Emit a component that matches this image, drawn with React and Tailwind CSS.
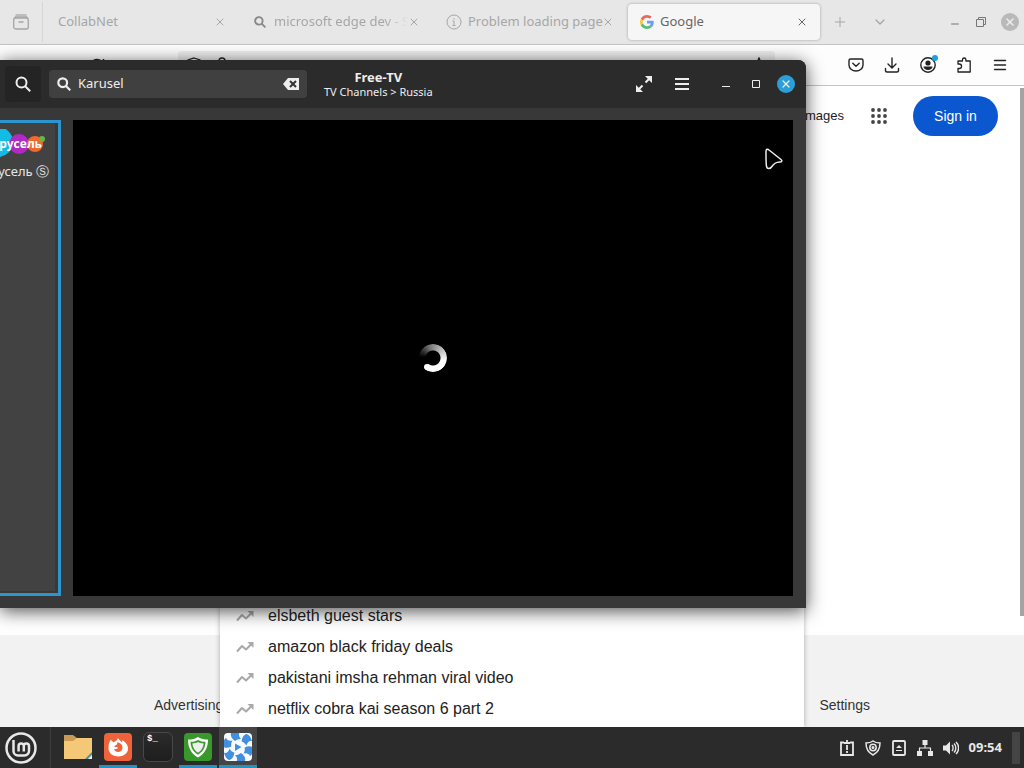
import React from 'react';
import { X, Plus, ChevronDown, Minus } from 'lucide-react';

const GoogleLogo = () => (
  <svg className="w-3.5 h-3.5 shrink-0" viewBox="0 0 48 48">
    <path fill="#ea6a5f" d="M24 9.5c3.5 0 6.700 1.200 9.200 3.600l6.900-6.900C35.900 2.400 30.500 0 24 0 14.600 0 6.500 5.400 2.600 13.200l8 6.200C12.400 13.700 17.700 9.500 24 9.500z" />
    <path fill="#6a9df5" d="M47 24.500c0-1.600-.2-3.100-.4-4.500H24v9h12.900c-.6 3-2.300 5.500-4.800 7.200l7.700 6C44.400 38 47 31.800 47 24.500z" />
    <path fill="#f5c84c" d="M10.500 28.600A14.500 14.500 0 0 1 10.500 19.400l-8-6.200a24 24 0 0 0 0 21.600l8-6.200z" />
    <path fill="#5dbb78" d="M24 48c6.500 0 11.900-2.100 15.900-5.800l-7.700-6c-2.200 1.500-4.900 2.300-8.200 2.300-6.300 0-11.600-4.200-13.500-9.900l-8 6.200C6.500 42.600 14.600 48 24 48z" />
  </svg>
);

const SearchGlyph = ({ className, strokeWidth = 2 }) => (
  <svg className={className} viewBox="0 0 16 16" fill="none" stroke="currentColor" strokeWidth={strokeWidth}>
    <circle cx="6.500" cy="6.500" r="5" />
    <path d="M10.200 10.200l5 5" />
  </svg>
);

const InfoGlyph = () => (
  <svg className="w-4 h-4 shrink-0" viewBox="0 0 16 16" fill="none" stroke="currentColor">
    <circle cx="8" cy="8" r="7" />
    <path d="M8 7v4.500M6.500 7H8M6.500 11.500h3M8 4v1.500" />
  </svg>
);

const TrendGlyph = () => (
  <svg className="w-[18px] h-3 shrink-0" viewBox="0 0 18 12">
    <path d="M1 10.500l5-5.500 4 3.500 5-5" fill="none" stroke="#a8a8a8" strokeWidth="2" strokeLinejoin="round" />
    <path d="M11.500 1H17.500v6z" fill="#a8a8a8" />
  </svg>
);

const pestanas = [
  { titulo: 'CollabNet' },
  {
    titulo: 'microsoft edge dev - S',
    icono: <SearchGlyph className="w-3 h-3 shrink-0 mx-0.5 text-[#888]" strokeWidth={2.5} />,
    difuminada: true,
  },
  { titulo: 'Problem loading page', icono: <InfoGlyph /> },
  { titulo: 'Google', icono: <GoogleLogo />, activa: true },
];

const sugerencias = [
  'elsbeth guest stars',
  'amazon black friday deals',
  'pakistani imsha rehman viral video',
  'netflix cobra kai season 6 part 2',
];

const Pestana = ({ titulo, icono, activa, difuminada }) => (
  <div
    role="tab"
    aria-selected={!!activa}
    className={`flex-1 min-w-0 max-w-[192px] h-9 flex items-center px-3 rounded-sm text-[13px] ${
      activa ? 'bg-[#f6f6f6] text-[#666] shadow-[0_0_3px_rgba(0,0,0,0.3)]' : 'text-[#a6a6a6]'
    }`}
  >
    {icono}
    <span
      className={`flex-1 min-w-0 whitespace-nowrap ${icono ? 'ml-1.5' : ''} ${
        difuminada ? 'overflow-hidden [mask-image:linear-gradient(to_left,transparent,#000_24px)]' : ''
      }`}
    >
      {titulo}
    </span>
    <button type="button" aria-label="Close tab" className="shrink-0">
      <X className="w-3 h-3" strokeWidth={2} />
    </button>
  </div>
);

const BarraPestanas = () => (
  <div className="h-11 shrink-0 flex items-center bg-[#e7e7e7] text-[#a6a6a6]">
    <button type="button" aria-label="Recent browsing" className="w-[43px] h-10 shrink-0 flex items-center justify-center border-r border-[#d6d6d6]">
      <svg className="w-4 h-4" viewBox="0 0 16 16" fill="none" stroke="currentColor" strokeWidth="1.3">
        <path d="M2.500 1h11" />
        <rect x=".7" y="4" width="14.600" height="11" rx="2" />
        <path d="M1.500 4.500l.8-1.500h11.400l.8 1.500M5.500 8h5" />
      </svg>
    </button>
    <div role="tablist" className="flex flex-1 gap-0.5 pl-[3px] min-w-0">
      {pestanas.map((p) => (
        <Pestana key={p.titulo} {...p} />
      ))}
      <button type="button" aria-label="New tab" className="w-9 flex items-center justify-center">
        <Plus className="w-4 h-4" strokeWidth={1.5} />
      </button>
      <button type="button" aria-label="List all tabs" className="w-10 flex items-center justify-center">
        <ChevronDown className="w-4 h-4" />
      </button>
    </div>
    <div className="flex items-center gap-3.5 pr-[5px] text-[#777]">
      <button type="button" aria-label="Minimize" className="pt-1">
        <Minus className="w-3 h-3" strokeWidth={2} />
      </button>
      <button type="button" aria-label="Restore">
        <svg className="w-3 h-3" viewBox="0 0 12 12" fill="none" stroke="currentColor">
          <path d="M1.500 3.500h7v7h-7zM3.500 3V1.500h7v7H9" />
        </svg>
      </button>
      <button type="button" aria-label="Close" className="w-[18px] h-[18px] rounded-full bg-[#b9b9b9] text-[#eee] flex items-center justify-center">
        <X className="w-3 h-3" strokeWidth={3} />
      </button>
    </div>
  </div>
);

const BarraNavegacion = () => (
  <div className="h-[42px] shrink-0 flex items-center pr-1.5 bg-[#fdfdfd] border-y border-[#c4c4c4] text-[#222]">
    <div className="w-[178px] shrink-0 flex items-center pl-[89px]">
      <button type="button" aria-label="Reload">
        <svg className="w-4 h-4" viewBox="0 0 16 16" fill="none" stroke="currentColor" strokeWidth="1.500">
          <path d="M14 6.500A6.500 6.500 0 1 0 14.500 9M14.500 2v5h-5" />
        </svg>
      </button>
    </div>
    <div className="w-[597px] min-w-0 h-7 flex items-center gap-3 px-2 rounded bg-[#eee]">
      <svg className="w-4 h-4 shrink-0" viewBox="0 0 16 16" fill="none" stroke="currentColor" strokeWidth="1.300">
        <path d="M8 1l6 2c0 6-2 10-6 12C4 13 2 9 2 3z" />
      </svg>
      <svg className="w-4 h-4 shrink-0" viewBox="0 0 16 16" fill="none" stroke="currentColor" strokeWidth="1.500">
        <path d="M5 7V4a3 3 0 0 1 6 0v3M3 7h10v8H3z" />
      </svg>
      <input aria-label="Address" className="flex-1 min-w-0 bg-transparent outline-none" />
      <svg className="w-4 h-4 shrink-0" viewBox="0 0 16 16" fill="none" stroke="currentColor" strokeWidth="1.300">
        <path d="M8 1l2 4.500 5 .5-3.500 3.500 1 5L8 12l-4.500 2.500 1-5L1 6l5-.5z" />
      </svg>
    </div>
    <div className="flex ml-auto">
      <button type="button" aria-label="Pocket" className="w-9 flex justify-center">
        <svg className="w-4 h-4" viewBox="0 0 16 16" fill="none" stroke="currentColor" strokeWidth="1.400" strokeLinecap="round" strokeLinejoin="round">
          <path d="M2.500 2h11A1.500 1.500 0 0 1 15 3.500V8A7 6 0 0 1 1 8V3.500A1.500 1.500 0 0 1 2.500 2zM4.800 6.300L8 9.300l3.200-3" />
        </svg>
      </button>
      <button type="button" aria-label="Downloads" className="w-9 flex justify-center">
        <svg className="w-4 h-4" viewBox="0 0 16 16" fill="none" stroke="currentColor" strokeWidth="1.400" strokeLinecap="round" strokeLinejoin="round">
          <path d="M8 1v9.500M4 7l4 4 4-4M1.500 11.500v2A1.500 1.500 0 0 0 3 15h10a1.500 1.500 0 0 0 1.500-1.500v-2" />
        </svg>
      </button>
      <button type="button" aria-label="Account" className="w-9 flex justify-center relative">
        <svg className="w-4 h-4" viewBox="0 0 16 16">
          <circle cx="8" cy="8" r="7.200" fill="none" stroke="currentColor" strokeWidth="1.400" />
          <circle cx="8" cy="6" r="2.600" fill="currentColor" />
          <path d="M3.500 9.500h9c0 2-2 3.500-4.500 3.500s-4.500-1.500-4.500-3.500z" fill="currentColor" />
        </svg>
        <span className="absolute -top-0.5 right-2 w-1.5 h-1.5 rounded-full bg-[#1fa0dd]" />
      </button>
      <button type="button" aria-label="Extensions" className="w-9 flex justify-center">
        <svg className="w-4 h-4" viewBox="0 0 16 16" fill="none" stroke="currentColor" strokeWidth="1.300" strokeLinejoin="round">
          <path d="M2 7V4h4.500V2.700a1.700 1.700 0 0 1 3.400 0V4h4.300v11H2v-3.500h1.300a1.700 1.700 0 0 0 0-4.500z" />
        </svg>
      </button>
      <button type="button" aria-label="Menu" className="w-9 flex justify-center">
        <svg className="w-4 h-4" viewBox="0 0 16 16" stroke="currentColor" strokeWidth="1.400" strokeLinecap="round">
          <path d="M2.500 3.500h11M2.500 8h11M2.500 12.500h11" />
        </svg>
      </button>
    </div>
  </div>
);

const PaginaGoogle = () => (
  <div className="relative flex-1 min-h-0 flex bg-white font-['Liberation_Sans',sans-serif]">
    <div className="flex-1 flex flex-col">
      <header className="flex items-center justify-end pt-2.5 pr-[26px] text-[13px] text-[#222]">
        <a href="#images">Images</a>
        <button type="button" aria-label="Google apps" className="ml-[27px] mr-[26px]">
          <svg className="w-4 h-4" viewBox="0 0 16 16" fill="#444">
            {[2, 8, 14].map((y) => [2, 8, 14].map((x) => <circle key={`${x}-${y}`} cx={x} cy={y} r="1.900" />))}
          </svg>
        </button>
        <a href="#signin" className="w-[85px] h-10 flex items-center justify-center rounded-full bg-[#0b57d0] text-sm text-white">
          Sign in
        </a>
      </header>
      <footer className="mt-auto h-[92px] flex items-end justify-between pl-[154px] pr-[154px] pb-3 bg-[#f2f2f2] text-sm text-[#333]">
        <a href="#ads">Advertising</a>
        <a href="#settings">Settings</a>
      </footer>
    </div>
    <div className="w-1 h-[528px] mt-0.5 bg-[#a3a3a3] absolute right-0" />

    {/* Lista de sugerencias sobre el pie de página */}
    <ul className="absolute bottom-0 left-[220px] w-[584px] pb-[3px] bg-white shadow-[0_0_5px_rgba(0,0,0,0.3)]">
      {sugerencias.map((texto) => (
        <li key={texto} className="h-[31px] flex items-center gap-3.5 pl-4 text-base text-[#222]">
          <TrendGlyph />
          {texto}
        </li>
      ))}
    </ul>
  </div>
);

const CanalActual = () => (
  <button type="button" className="w-[61px] shrink-0 flex flex-col items-end pr-[9px] pt-1.5 border-3 border-l-0 border-[#2a95cf] bg-[#424242] overflow-hidden shadow-[inset_-3px_-2px_0_#383838]">
    <svg className="w-[95px] h-7 shrink-0" viewBox="0 0 95 28">
      <circle cx="44" cy="13" r="15" fill="#12bce4" />
      <circle cx="65" cy="15" r="10" fill="#b02bc4" />
      <circle cx="81" cy="15" r="8" fill="#f0692a" />
      <circle cx="88" cy="10" r="3" fill="#6cb544" />
      <text x="88" y="19" textAnchor="end" fill="#fff" fontSize="12" fontWeight="bold" fontFamily="Open Sans, sans-serif">
        Карусель
      </text>
    </svg>
    <span className="mt-1 text-[13px] leading-5 whitespace-nowrap text-[#e6e6e6]">Карусель Ⓢ</span>
  </button>
);

const VentanaFreeTV = () => (
  <section className="absolute left-0 top-[60px] w-[806px] flex flex-col rounded-tr-lg overflow-hidden bg-[#383838] text-[#eee] shadow-[0_3px_18px_rgba(0,0,0,0.7)]">
    <header className="h-12 flex items-center pl-[5px] pr-[11px] bg-[#2b2b2b]">
      <button type="button" aria-label="Search" className="w-9 h-9 flex items-center justify-center rounded bg-[#242424]">
        <SearchGlyph className="w-4 h-4" />
      </button>
      <div className="w-[258px] h-7 ml-2 px-2 flex items-center gap-[7px] rounded-sm bg-[#404040]">
        <SearchGlyph className="w-3.5 h-3.5 shrink-0" strokeWidth={2.5} />
        <input aria-label="Search channels" defaultValue="Karusel" className="flex-1 min-w-0 bg-transparent text-[13px] outline-none" />
        <button type="button" aria-label="Clear">
          <svg className="w-4 h-3" viewBox="0 0 16 12">
            <path d="M5 0h11v12H5L0 6z" fill="currentColor" />
            <path d="M7 3l6 6M13 3L7 9" stroke="#333" strokeWidth="2" />
          </svg>
        </button>
      </div>
      <div className="ml-[17px] text-center">
        <h1 className="text-[13px] leading-4 font-bold">Free-TV</h1>
        <p className="text-[11px] leading-3.5">TV Channels &gt; Russia</p>
      </div>
      <div className="ml-auto flex items-center">
        <button type="button" aria-label="Fullscreen" className="mr-[22px]">
          <svg className="w-4 h-4" viewBox="0 0 16 16">
            <path d="M9.500 6.500L14 2M6.500 9.500L2 14" stroke="currentColor" strokeWidth="2" />
            <path d="M9 0h7v7zM0 9v7h7z" fill="currentColor" />
          </svg>
        </button>
        <button type="button" aria-label="Menu" className="mr-[30px]">
          <svg className="w-4 h-4" viewBox="0 0 16 16" stroke="currentColor" strokeWidth="2">
            <path d="M1 3h14M1 8h14M1 13h14" />
          </svg>
        </button>
        <button type="button" aria-label="Minimize" className="w-[30px] flex">
          <svg className="w-3 h-3" viewBox="0 0 12 12" stroke="currentColor">
            <path d="M2 8.500h8" />
          </svg>
        </button>
        <button type="button" aria-label="Maximize" className="w-[27px] flex">
          <svg className="w-3 h-3" viewBox="0 0 12 12" fill="none" stroke="currentColor">
            <path d="M2.500 2.500h7v7h-7z" />
          </svg>
        </button>
        <button type="button" aria-label="Close" className="w-[18px] h-[18px] rounded-full bg-[#2a9fd8] flex items-center justify-center">
          <X className="w-3 h-3" strokeWidth={2.5} />
        </button>
      </div>
    </header>
    <div className="flex gap-3 pt-3 pr-[13px] pb-3">
      <CanalActual />
      <div className="relative flex-1 h-[476px] flex items-center justify-center bg-black">
        <div className="relative w-7 h-7 rounded-full bg-[conic-gradient(from_215deg,transparent_0deg,transparent_60deg,#777_130deg,#fff_250deg,#fff_360deg)] [mask:radial-gradient(circle,transparent_7px,#000_8px)]">
          <span className="absolute left-[5px] bottom-0.5 w-1.5 h-1.5 rounded-full bg-white" />
        </div>
        <svg className="absolute top-7 right-2.5 w-[18px] h-[22px]" viewBox="0 0 18 22" fill="#000" stroke="#eee" strokeWidth="1.500" strokeLinejoin="round">
          <path d="M1 3.500C1 1 2.500.5 4 2l12 9.500c1.500 1.300.8 2.500-1 2.500-4 .3-6 1-8.500 5-1.300 2-4.500 2.200-5-.5-.6-4-.5-11-.5-15z" />
        </svg>
      </div>
    </div>
  </section>
);

const aplicaciones = [
  {
    nombre: 'Files',
    icono: (
      <svg className="w-[30px] h-[30px]" viewBox="0 0 30 30">
        <path d="M1 3h9l4 3h15v20H1z" fill="#c99a55" />
        <path d="M1 9h9l4-3h15v21H1z" fill="#f5c878" />
        <path d="M22 27l7-7v3l-4 4z" fill="#49909a" />
        <path d="M25 27l4-4v4z" fill="#e9edf0" />
      </svg>
    ),
  },
  {
    nombre: 'Firefox',
    abierta: true,
    icono: (
      <svg className="w-7 h-7" viewBox="0 0 28 28">
        <rect width="28" height="28" rx="4" fill="#f0623a" />
        <path d="M6.500 7c1.500.5 2 1.500 3 2.500 1-1 3-1 4.500-4.500 1 2 2.500 2.500 3.500 4 1 0 1-1 1-2 4 3 6 6 5.500 9.500-.6 4-4.500 7-9.500 7S4.500 20.500 4.500 15.500C4.500 12 5 10 6.500 7z" fill="#fff" />
        <path d="M13 9.500c1 1.500-1 3-3 3.500 1 1.500 2.500 1 4 1.500-.5 2-2.500 1.500-4 1.500 1 4.500 8.500 4 8.500-1.500 0-3-2.500-5-5.500-5z" fill="#f0623a" />
      </svg>
    ),
  },
  {
    nombre: 'Terminal',
    icono: (
      <span className="w-[30px] h-[30px] rounded-md border border-[#484848] bg-gradient-to-b from-[#2b2b2b] to-[#1e1e1e] pl-[3px] text-left text-[9px] leading-3 font-bold text-white font-['Liberation_Mono',monospace]">
        $_
      </span>
    ),
  },
  {
    nombre: 'Shield',
    abierta: true,
    icono: (
      <svg className="w-7 h-7" viewBox="0 0 28 28">
        <rect width="28" height="28" rx="4" fill="#39982b" />
        <path d="M14 4c3 2 6 2.500 10 2.500 0 8-3 14-10 18C7 20.500 4 14.500 4 6.500 8 6.500 11 6 14 4z" fill="#fff" />
        <path d="M14 7c2.300 1.300 4.500 1.800 7.500 1.800-.2 6-2.800 10-7.500 13-4.700-3-7.300-7-7.500-13C9.500 8.800 11.700 8.300 14 7z" fill="#39982b" />
        <path d="M14 9c2 1 3.500 1.400 5.700 1.500-.4 4-2.200 7-5.700 9.300-3.500-2.300-5.300-5.300-5.700-9.300C10.500 10.400 12 10 14 9z" fill="#eee" />
      </svg>
    ),
  },
  {
    nombre: 'Free-TV',
    abierta: true,
    activa: true,
    icono: (
      <svg className="w-7 h-7 rounded" viewBox="0 0 28 28">
        <rect width="28" height="28" fill="#f7fbff" />
        <g fill="#438fdf">
          {[0, 60, 120, 180, 240, 300].map((a) => (
            <path key={a} transform={`rotate(${a} 14 14)`} d="M11 8C8 6 6 3 7 0c2-2 6-2 9-1-2 2-1 5 1 7-2-.3-4 .5-6 2z" />
          ))}
          <path d="M11 10.500l6.500 3.500-6.500 4z" />
        </g>
      </svg>
    ),
  },
];

const BarraTareas = () => (
  <nav className="relative h-[41px] shrink-0 flex items-center pl-1 pr-1 bg-[#2b2b2b] text-[#e8e8e8]">
    <button type="button" aria-label="Start" className="w-[47px] h-full flex items-center border-r border-[#3d3d3d]">
      <svg className="w-[34px] h-[34px]" viewBox="0 0 34 34" fill="none" stroke="currentColor" strokeWidth="2.500">
        <circle cx="17" cy="17" r="14.500" />
        <path d="M9.500 9v11a4.500 4.500 0 0 0 4.500 4.500h6.500A4.500 4.500 0 0 0 25 20v-5a2.600 2.600 0 0 0-5.200 0v5.500M19.800 15a2.600 2.600 0 0 0-5.200 0v5.500" />
      </svg>
    </button>
    <div className="flex h-full gap-0.5 ml-2">
      {aplicaciones.map(({ nombre, icono, abierta, activa }) => (
        <button
          key={nombre}
          type="button"
          aria-label={nombre}
          className={`w-[38px] flex items-center justify-center border-b-3 border-t-2 border-t-transparent ${
            abierta ? 'border-b-[#2790c3]' : 'border-b-transparent'
          } ${activa ? 'bg-[#454545]' : ''}`}
        >
          {icono}
        </button>
      ))}
    </div>
    <div className="ml-auto flex items-center gap-2.5">
      <svg className="w-4 h-4" viewBox="0 0 16 16" fill="none" stroke="currentColor" strokeWidth="1.800">
        <path d="M5 2.500H2v12.500h12V2.500h-3M5 3h6M8 0v3M8 5v5M8 11v2" />
      </svg>
      <svg className="w-4 h-4" viewBox="0 0 16 16" fill="none" stroke="currentColor" strokeWidth="1.500">
        <path d="M8 1c2 1.500 4 2 7 2 0 6-3 10-7 12C4 13 1 9 1 3c3 0 5-.5 7-2z" />
        <circle cx="8" cy="7.500" r="3.200" />
        <circle cx="8" cy="7.500" r=".8" />
      </svg>
      <svg className="w-4 h-4" viewBox="0 0 16 16" fill="none" stroke="currentColor" strokeWidth="1.800">
        <rect x="2" y="1" width="12" height="14" rx="1" />
        <path d="M5 8l3-3 3 3zM5 10h6v1H5z" fill="currentColor" stroke="none" />
      </svg>
      <svg className="w-4 h-4" viewBox="0 0 16 16" fill="currentColor">
        <path d="M5.500 0h5v5h-5zM0 11h5v5H0zM11 11h5v5h-5z" />
        <path d="M8 5v3M2.500 11V8h11v3" fill="none" stroke="currentColor" strokeWidth="1.200" />
      </svg>
      <svg className="w-4 h-4" viewBox="0 0 16 16">
        <path d="M0 5.500h3l4-4v13l-4-4H0z" fill="currentColor" />
        <path d="M9 5c1.500 1.500 1.500 4.500 0 6M11 3.500c2.500 2.500 2.500 6.500 0 9M13 2c3.500 3.500 3.500 8.500 0 12" fill="none" stroke="currentColor" strokeWidth="1.400" />
      </svg>
      <time className="text-[13px] font-bold">09:54</time>
      <button type="button" aria-label="Show desktop" className="w-2 h-8 bg-[#444]" />
    </div>
  </nav>
);

const App = () => {
  return (
    <div className="relative h-screen flex flex-col overflow-hidden bg-white font-['Noto_Sans',sans-serif]">
      <BarraPestanas />
      <BarraNavegacion />
      <PaginaGoogle />
      <VentanaFreeTV />
      <BarraTareas />
    </div>
  );
};

export default App;
